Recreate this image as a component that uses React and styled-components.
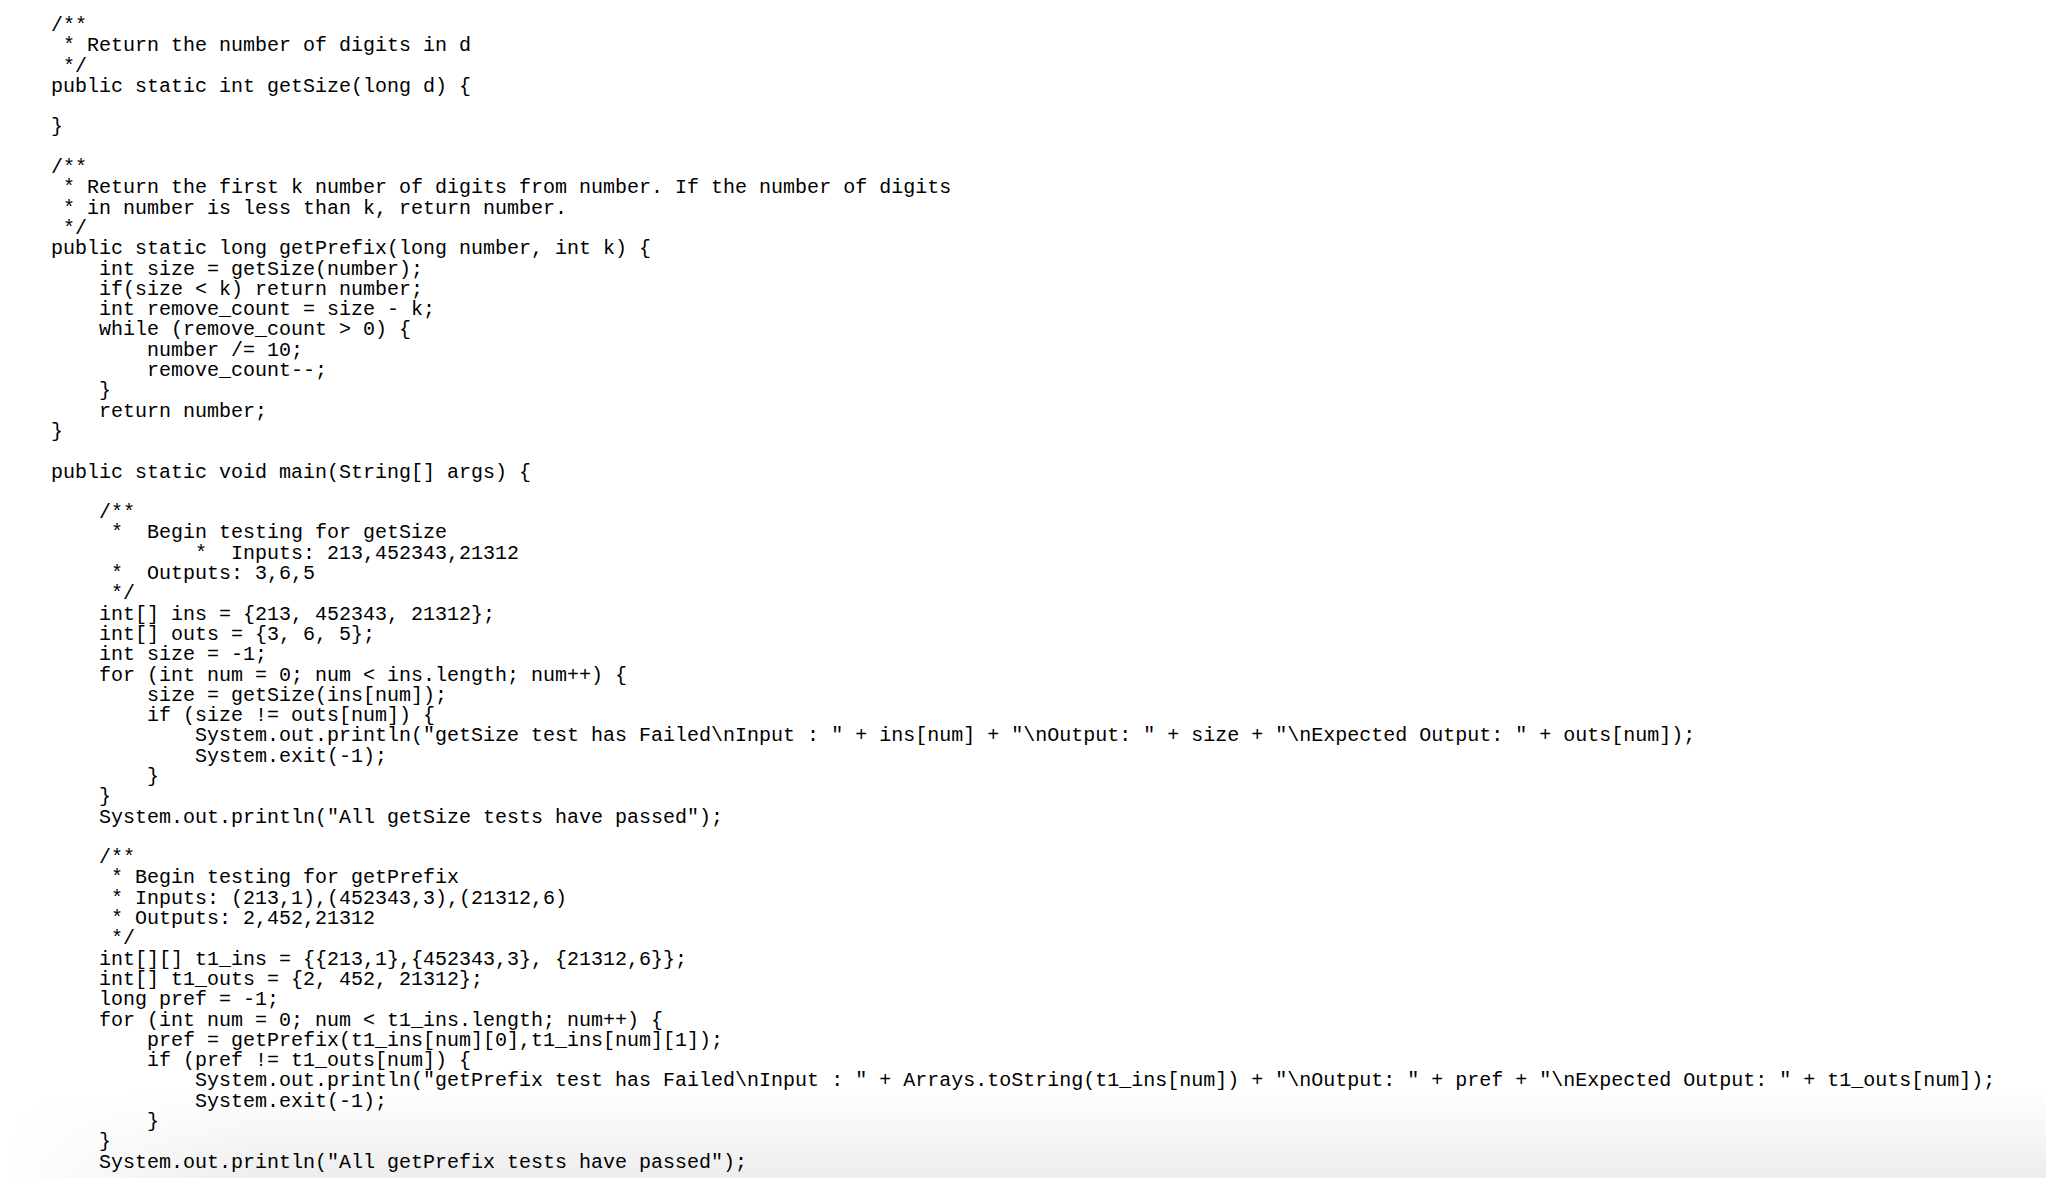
import React from "react";
import styled, { createGlobalStyle } from "styled-components";

const GlobalStyle = createGlobalStyle`
  html, body {
    margin: 0;
    padding: 0;
    background: #ffffff;
  }
`;

const Page = styled.div`
  position: relative;
  width: 2046px;
  height: 1178px;
  overflow: hidden;
  background: #ffffff;
`;

const Code = styled.div`
  display: flex;
  flex-direction: column;
  padding: 16px 0 0 51px;
  font-family: "Liberation Mono", "Courier New", monospace;
  font-size: 20px;
  color: #000;
`;

const Line = styled.div`
  height: 20.3px;
  line-height: 20.3px;
  white-space: pre;
`;

const Shade = styled.div`
  position: absolute;
  left: 0;
  right: 0;
  bottom: 0;
  height: 90px;
  pointer-events: none;
  background: linear-gradient(to bottom, rgba(0, 0, 0, 0), rgba(0, 0, 0, 0.07));
  -webkit-mask-image: linear-gradient(to right, transparent 0, #000 260px);
  mask-image: linear-gradient(to right, transparent 0, #000 260px);
`;

const source = `/**
 * Return the number of digits in d
 */
public static int getSize(long d) {

}

/**
 * Return the first k number of digits from number. If the number of digits
 * in number is less than k, return number.
 */
public static long getPrefix(long number, int k) {
    int size = getSize(number);
    if(size < k) return number;
    int remove_count = size - k;
    while (remove_count > 0) {
        number /= 10;
        remove_count--;
    }
    return number;
}

public static void main(String[] args) {

    /**
     *  Begin testing for getSize
            *  Inputs: 213,452343,21312
     *  Outputs: 3,6,5
     */
    int[] ins = {213, 452343, 21312};
    int[] outs = {3, 6, 5};
    int size = -1;
    for (int num = 0; num < ins.length; num++) {
        size = getSize(ins[num]);
        if (size != outs[num]) {
            System.out.println("getSize test has Failed\\nInput : " + ins[num] + "\\nOutput: " + size + "\\nExpected Output: " + outs[num]);
            System.exit(-1);
        }
    }
    System.out.println("All getSize tests have passed");

    /**
     * Begin testing for getPrefix
     * Inputs: (213,1),(452343,3),(21312,6)
     * Outputs: 2,452,21312
     */
    int[][] t1_ins = {{213,1},{452343,3}, {21312,6}};
    int[] t1_outs = {2, 452, 21312};
    long pref = -1;
    for (int num = 0; num < t1_ins.length; num++) {
        pref = getPrefix(t1_ins[num][0],t1_ins[num][1]);
        if (pref != t1_outs[num]) {
            System.out.println("getPrefix test has Failed\\nInput : " + Arrays.toString(t1_ins[num]) + "\\nOutput: " + pref + "\\nExpected Output: " + t1_outs[num]);
            System.exit(-1);
        }
    }
    System.out.println("All getPrefix tests have passed");`;

const lines = source.split("\n");

export default function App() {
  return (
    <Page>
      <GlobalStyle />
      <Code>
        {lines.map((text, i) => (
          <Line key={i}>{text}</Line>
        ))}
      </Code>
      <Shade />
    </Page>
  );
}
